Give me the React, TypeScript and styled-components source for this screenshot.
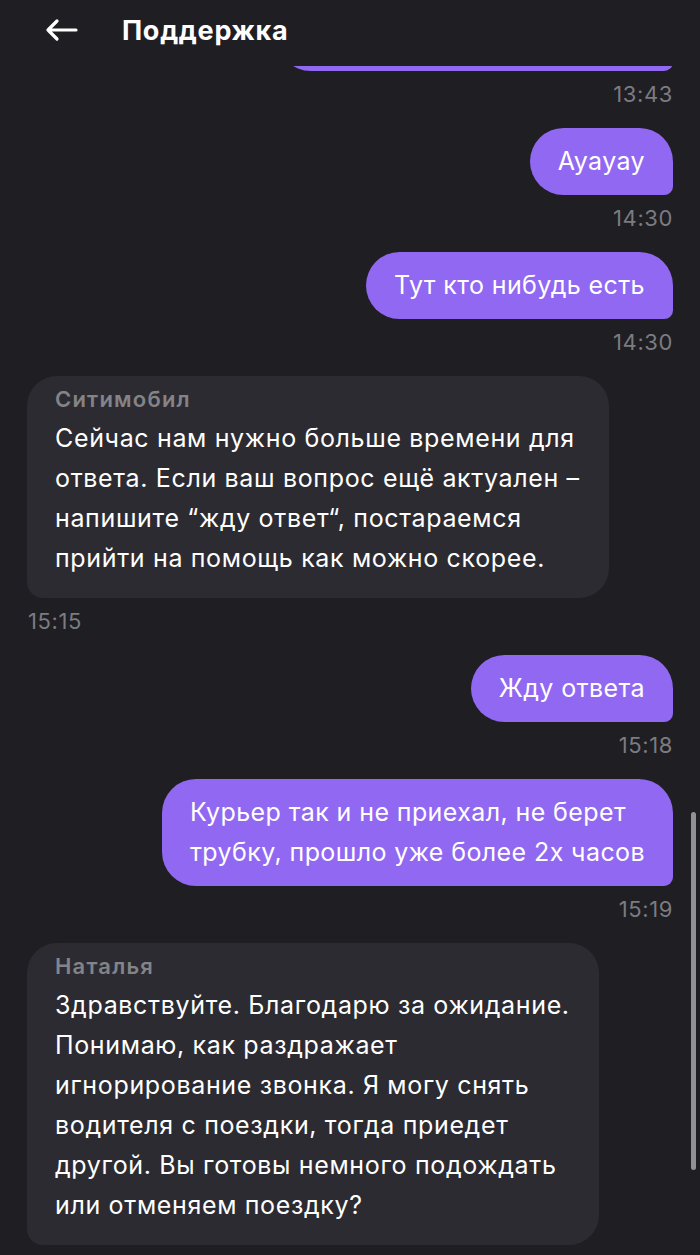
import React from 'react';
import styled, { createGlobalStyle } from 'styled-components';

const GlobalStyle = createGlobalStyle`
  html, body {
    margin: 0;
    padding: 0;
    background: #1f1e23;
  }
  * {
    box-sizing: border-box;
  }
`;

const Screen = styled.div`
  position: relative;
  width: 700px;
  height: 1255px;
  overflow: hidden;
  background: #1f1e23;
  font-family: Inter, Roboto, "Noto Sans", sans-serif;
  color: #ffffff;
  display: flex;
  flex-direction: column;
`;

const Header = styled.header`
  flex: 0 0 66px;
  display: flex;
  align-items: center;
  padding: 0 0 6px 44px;
  background: #1f1e23;
  position: relative;
  z-index: 2;
`;

const BackButton = styled.button`
  width: 34px;
  height: 24px;
  padding: 0;
  border: none;
  background: none;
  display: flex;
  align-items: center;
  color: #ffffff;
  cursor: pointer;
`;

const Title = styled.h1`
  margin: 0 0 0 44px;
  font-size: 27px;
  font-weight: 700;
  letter-spacing: 0.7px;
`;

const Feed = styled.div`
  flex: 1;
  overflow: hidden;
  display: flex;
  flex-direction: column;
  padding: 0 27px 0 27px;
`;

const Group = styled.div<{ $out?: boolean }>`
  display: flex;
  flex-direction: column;
  align-items: ${(p) => (p.$out ? 'flex-end' : 'flex-start')};
  margin-bottom: 22px;
`;

const Bubble = styled.div<{ $out?: boolean }>`
  font-size: 25px;
  line-height: 40px;
  white-space: pre-line;
  ${(p) =>
    p.$out
      ? `
    background: #9168f2;
    color: #ffffff;
    letter-spacing: 0.4px;
    padding: 13px 28px 14px 28px;
    border-radius: 34px 34px 9px 34px;
  `
      : `
    background: #2c2b31;
    color: #ffffff;
    letter-spacing: 0.65px;
    padding: 10px 29px 20px 28px;
    border-radius: 30px 30px 30px 16px;
  `}
`;

const Stub = styled(Bubble)`
  width: 396px;
  height: 80px;
  margin-top: -75px;
`;

const Sender = styled.div`
  font-size: 22px;
  line-height: 26px;
  font-weight: 600;
  letter-spacing: 1.2px;
  color: #838388;
  margin-bottom: 6px;
`;

const Time = styled.div<{ $out?: boolean }>`
  margin-top: 11px;
  font-size: 22px;
  line-height: 24px;
  letter-spacing: 0.6px;
  color: #7b7b80;
  padding: ${(p) => (p.$out ? '0' : '0 0 0 1px')};
`;

const ScrollThumb = styled.div`
  position: absolute;
  right: 4px;
  top: 812px;
  width: 5px;
  height: 358px;
  border-radius: 3px;
  background: #909095;
`;

type Msg = {
  out?: boolean;
  sender?: string;
  text: string;
  time: string;
};

const messages: Msg[] = [
  { out: true, text: 'Ayayay', time: '14:30' },
  { out: true, text: 'Тут кто нибудь есть', time: '14:30' },
  {
    sender: 'Ситимобил',
    text:
      'Сейчас нам нужно больше времени для\nответа. Если ваш вопрос ещё актуален –\nнапишите “жду ответ“, постараемся\nприйти на помощь как можно скорее.',
    time: '15:15',
  },
  { out: true, text: 'Жду ответа', time: '15:18' },
  {
    out: true,
    text: 'Курьер так и не приехал, не берет\nтрубку, прошло уже более 2х часов',
    time: '15:19',
  },
  {
    sender: 'Наталья',
    text:
      'Здравствуйте. Благодарю за ожидание.\nПонимаю, как раздражает\nигнорирование звонка. Я могу снять\nводителя с поездки, тогда приедет\nдругой. Вы готовы немного подождать\nили отменяем поездку?',
    time: '',
  },
];

const BackArrow = () => (
  <svg width="34" height="24" viewBox="0 0 34 24" fill="none">
    <path
      d="M32 12H4M13 3L4 12L13 21"
      stroke="currentColor"
      strokeWidth="3.2"
      strokeLinecap="round"
      strokeLinejoin="round"
    />
  </svg>
);

export default function App() {
  return (
    <Screen>
      <GlobalStyle />
      <Header>
        <BackButton aria-label="Назад">
          <BackArrow />
        </BackButton>
        <Title>Поддержка</Title>
      </Header>
      <Feed>
        <Group $out>
          <Stub $out />
          <Time $out>13:43</Time>
        </Group>
        {messages.map((m, i) => (
          <Group key={i} $out={m.out}>
            <Bubble $out={m.out}>
              {m.sender && <Sender>{m.sender}</Sender>}
              {m.text}
            </Bubble>
            {m.time && <Time $out={m.out}>{m.time}</Time>}
          </Group>
        ))}
      </Feed>
      <ScrollThumb />
    </Screen>
  );
}
